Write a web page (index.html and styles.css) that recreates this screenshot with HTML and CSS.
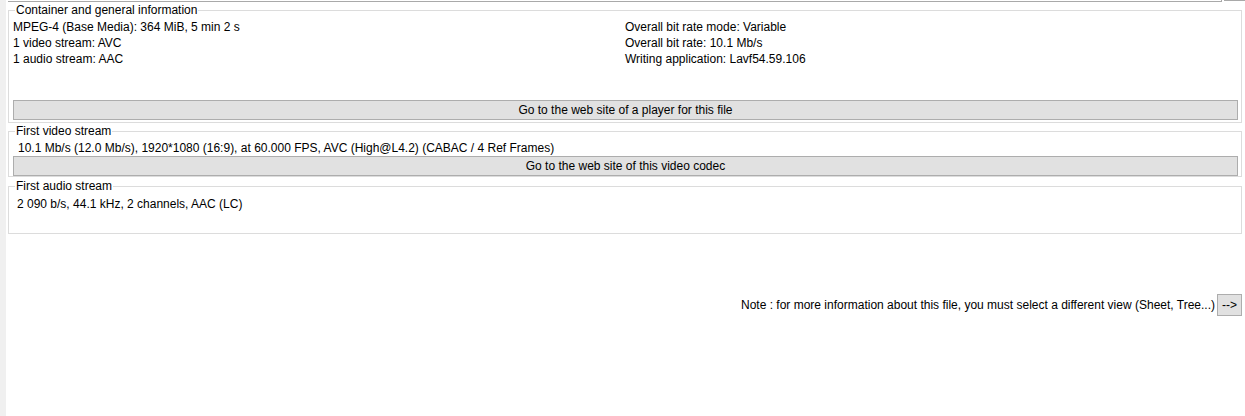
FILE: index.html
```html
<!DOCTYPE html>
<html>
<head>
<meta charset="utf-8">
<link rel="stylesheet" href="styles.css">
</head>
<body>
<div class="app">
  <div class="strip"></div>
  <div class="main">
    <div class="topbar">
      <div class="top-combo"></div>
      <div class="top-side"></div>
    </div>
    <fieldset class="group g1">
      <legend>Container and general information</legend>
      <div class="cols">
        <div class="col">
          <div class="line">MPEG-4 (Base Media): 364 MiB, 5 min 2 s</div>
          <div class="line">1 video stream: AVC</div>
          <div class="line">1 audio stream: AAC</div>
        </div>
        <div class="col">
          <div class="line">Overall bit rate mode: Variable</div>
          <div class="line">Overall bit rate: 10.1 Mb/s</div>
          <div class="line">Writing application: Lavf54.59.106</div>
        </div>
      </div>
      <div class="btn wide">Go to the web site of a player for this file</div>
    </fieldset>
    <fieldset class="group g2">
      <legend>First video stream</legend>
      <div class="line indent">10.1 Mb/s (12.0 Mb/s), 1920*1080 (16:9), at 60.000 FPS, AVC (High@L4.2) (CABAC / 4 Ref Frames)</div>
      <div class="btn wide">Go to the web site of this video codec</div>
    </fieldset>
    <fieldset class="group g3">
      <legend>First audio stream</legend>
      <div class="line indent2">2 090 b/s, 44.1 kHz, 2 channels, AAC (LC)</div>
    </fieldset>
    <div class="note">
      <span class="note-text">Note : for more information about this file, you must select a different view (Sheet, Tree...)</span>
      <div class="btn small">--&gt;</div>
    </div>
  </div>
</div>
</body>
</html>
```
FILE: styles.css
```css
html, body {
  margin: 0;
  padding: 0;
  background: #ffffff;
}
body {
  font-family: "Liberation Sans", Arial, sans-serif;
  font-size: 12px;
  color: #000000;
}
.app {
  display: flex;
  width: 1245px;
  height: 416px;
  overflow: hidden;
}
.strip {
  width: 6px;
  flex: none;
  background: #f0f0f0;
}
.main {
  flex: 1;
  padding-left: 2px;
  display: flex;
  flex-direction: column;
}
.topbar {
  display: flex;
  height: 2px;
  gap: 2px;
}
.top-combo {
  flex: 1;
  height: 1px;
  border-bottom: 1px solid #a9a9a9;
  border-right: 1px solid #a9a9a9;
}
.top-side {
  width: 21px;
  height: 0;
  border-bottom: 1px solid #a9a9a9;
}
.group {
  margin: 0 3px 0 0;
  border: 1px solid #dcdcdc;
  padding: 0 3px 0 4px;
  min-width: 0;
}
.group legend {
  margin-left: 2px;
  padding: 0 1px;
  line-height: 14px;
  height: 14px;
}
.g1 {
  margin-top: 1px;
  padding-top: 2px;
  padding-bottom: 2px;
}
.g2 {
  margin-top: 1px;
  padding-top: 2px;
  padding-bottom: 0;
}
.g3 {
  margin-top: 2px;
  padding-top: 3px;
  padding-bottom: 21px;
}
.cols {
  display: grid;
  grid-template-columns: 612px 1fr;
  margin-bottom: 33px;
}
.line {
  line-height: 16px;
  height: 16px;
  white-space: nowrap;
}
.indent { padding-left: 5px; }
.indent2 { padding-left: 4px; }
.btn {
  background: #e1e1e1;
  border: 1px solid #adadad;
  text-align: center;
  box-sizing: border-box;
}
.btn.wide {
  height: 20px;
  line-height: 18px;
}
.note {
  margin-top: 60px;
  margin-right: 3px;
  display: flex;
  justify-content: flex-end;
  align-items: center;
  gap: 2px;
}
.note-text {
  white-space: nowrap;
}
.btn.small {
  width: 25px;
  height: 22px;
  line-height: 20px;
}
```
